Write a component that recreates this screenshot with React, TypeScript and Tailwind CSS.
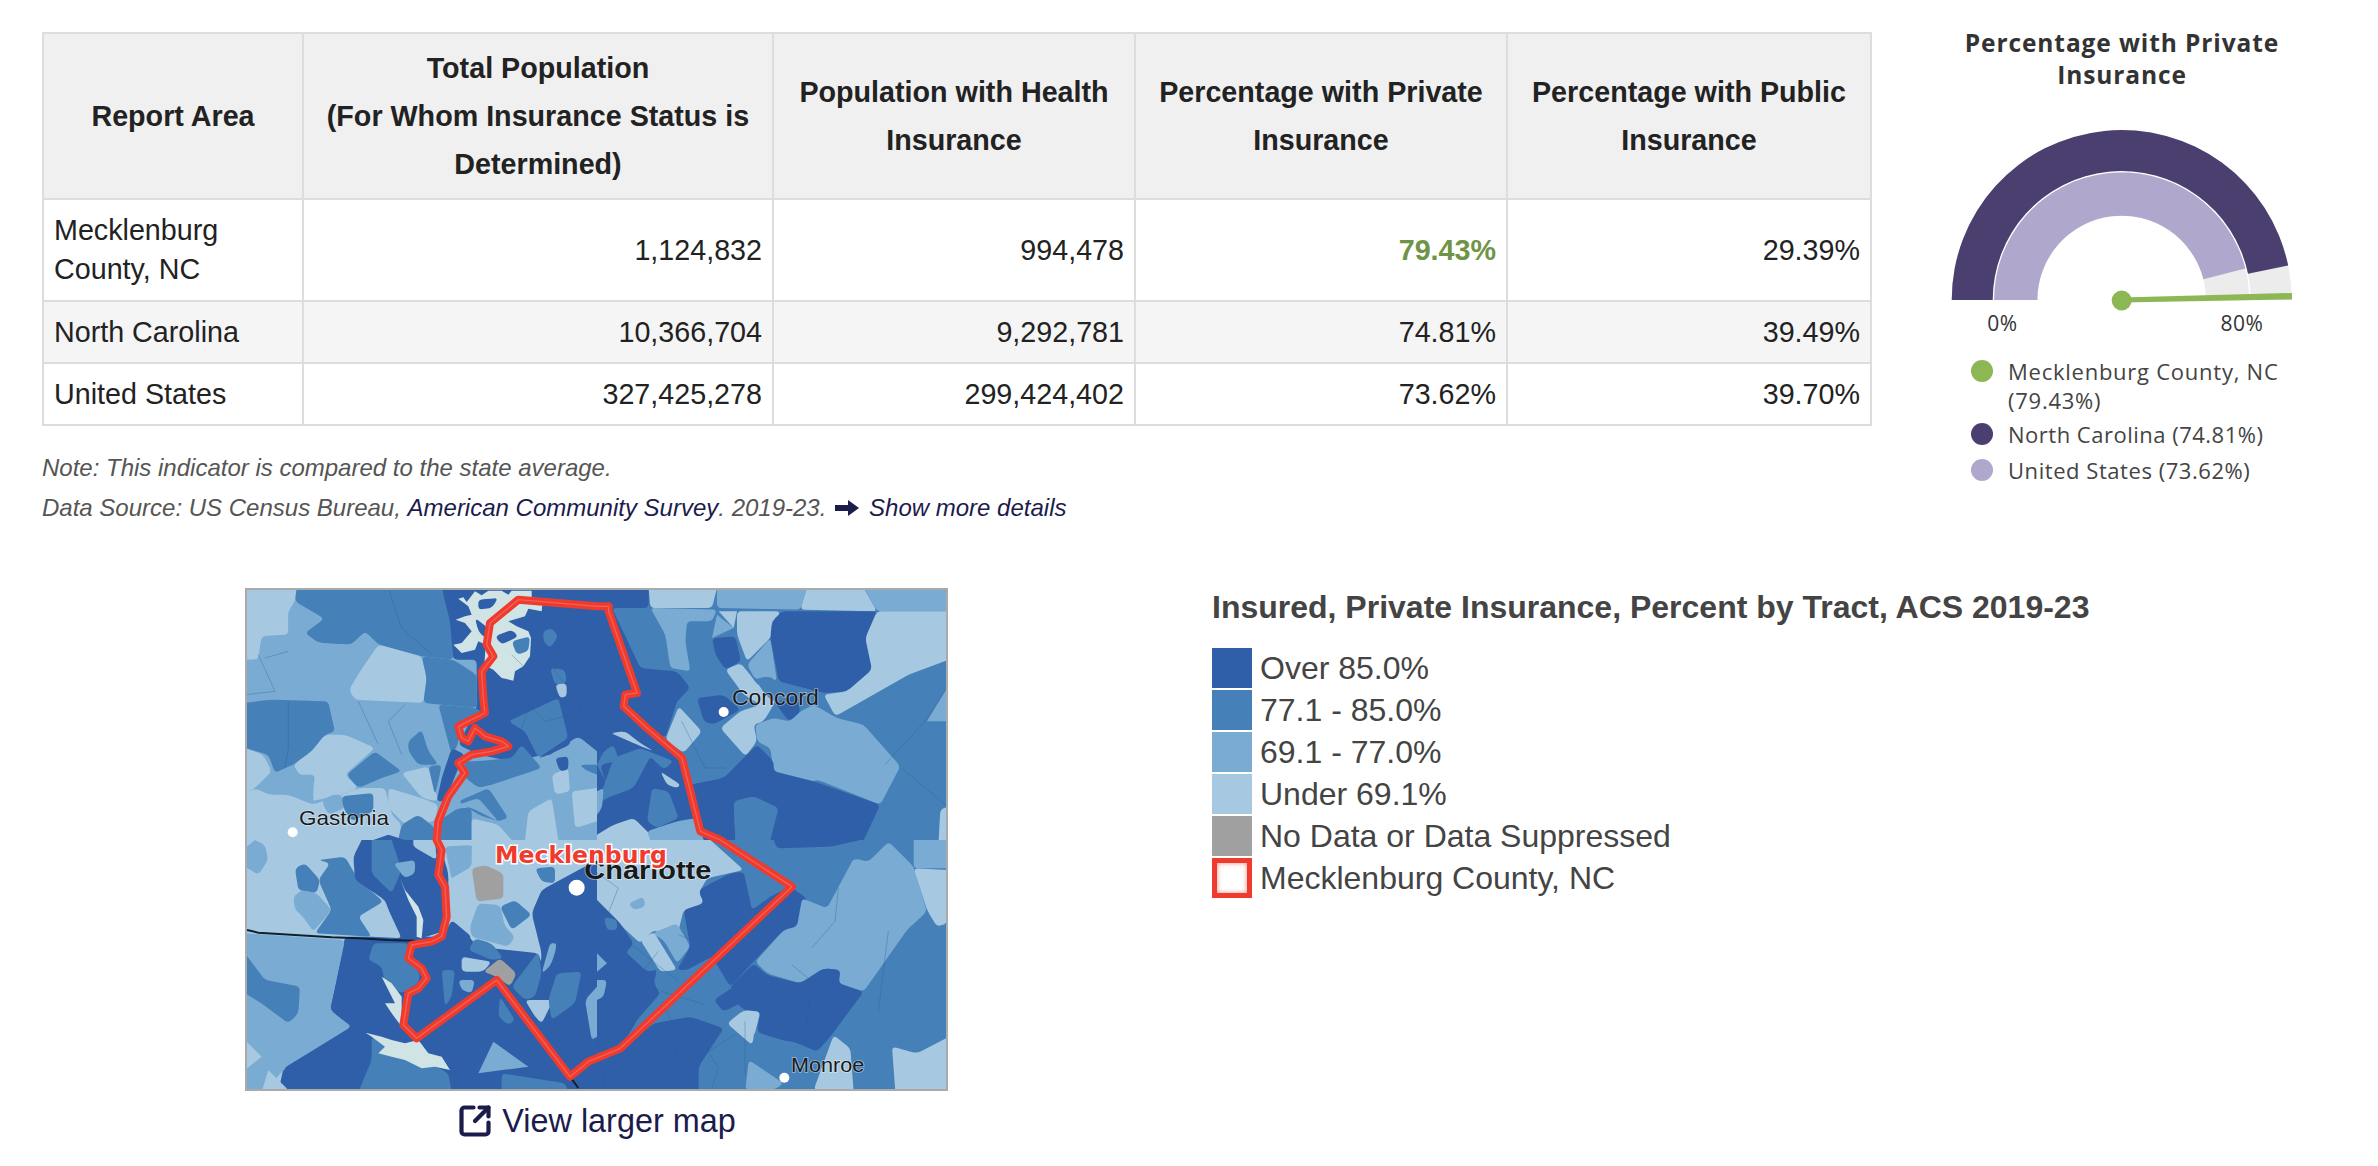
import { SquareArrowOutUpRight } from "lucide-react";

const D = "#2f5fa8", M = "#4580b9", L = "#79abd3", P = "#a6c8e0", G = "#a0a0a0", W = "#d0e4e6";

type Poly = [string, string];

const q1: Poly[] = [
  [L, "0,0 1056,0 1056,756 0,756"],
  [D, "590,0 1056,0 1056,500 900,500 800,520 700,500 640,470 695,360 695,215 625,215 610,100"],
  [P, "0,0 155,0 150,40 130,70 130,140 50,145 40,215 0,215"],
  [L, "150,40 238,92 180,130 130,140 130,70"],
  [M, "155,0 590,0 615,100 625,215 530,205 400,170 360,130 320,170 220,165 180,135 238,92 150,40"],
  [L, "0,215 40,215 50,145 130,140 180,135 220,165 320,170 360,130 400,170 340,250 315,310 320,335 0,325"],
  [P, "400,170 530,205 545,270 535,345 330,335 312,305 345,250"],
  [M, "530,205 625,215 695,260 695,360 535,345 545,270"],
  [M, "0,345 75,335 250,340 270,430 240,440 200,490 145,530 90,555 70,500 0,480"],
  [P, "0,480 55,500 80,550 30,600 0,620"],
  [L, "250,340 535,345 580,350 620,500 590,530 550,530 470,555 410,490 390,480 300,440 270,430"],
  [P, "145,530 200,490 240,440 300,440 390,480 300,560 340,600 290,620 200,640 210,560 160,560"],
  [L, "35,600 90,555 145,530 170,570 205,560 205,650 130,620 70,620"],
  [M, "490,460 530,425 550,490 580,530 520,530 490,490"],
  [M, "580,350 695,360 720,380 640,410 640,470 620,500"],
  [M, "305,560 390,490 470,550 410,570 340,600"],
  [L, "410,570 470,555 530,630 430,600"],
  [P, "470,555 550,535 580,640 530,630"],
  [P, "0,620 30,600 70,620 130,620 205,650 290,620 340,600 420,600 440,680 470,710 460,756 0,756"],
  [P, "430,600 530,630 580,650 570,700 480,710 430,660"],
  [L, "260,620 290,620 300,660 250,680 230,640"],
  [M, "290,625 385,615 385,670 320,700 295,660"],
  [M, "550,535 590,530 580,580 570,620"],
  [D, "620,480 660,500 640,540 600,640 575,640 590,570"],
  [M, "470,710 520,680 570,720 565,756 460,756"],
  [D, "385,756 430,740 480,756"],
  [M, "580,700 640,660 680,660 680,756 570,756"],
  [M, "790,400 940,330 970,450 880,510 840,430"],
  [M, "660,520 700,520 800,510 830,470 890,540 740,590 700,600 650,560"],
  [L, "735,600 890,545 930,600 850,670 840,730 790,700 740,640"],
  [M, "640,640 730,600 790,690 760,700 700,680"],
  [L, "640,650 700,630 760,700 680,660"],
  [L, "900,510 1000,445 1056,490 1056,756 850,756 860,660 930,600"],
  [D, "880,510 975,450 975,470 900,505"],
  [P, "920,560 970,540 975,610 930,620"],
  [P, "850,670 920,630 940,756 840,756"],
  [P, "980,610 1056,600 1056,700 990,720"],
  [D, "930,510 970,505 970,545 945,550"],
  [M, "1005,530 1056,530 1056,560 1020,545"],
  [P, "680,690 760,710 800,756 680,756"],
  [M, "915,240 960,245 965,285 930,290"],
  [P, "930,290 965,285 965,325 945,330"],
  [M, "895,130 920,120 940,145 915,180 895,160"],
  [W, "640,32 655,28 665,42 690,10 710,22 730,8 770,8 790,20 800,8 860,8 860,30 892,50 890,70 850,62 840,85 790,100 815,115 850,130 858,150 855,205 835,235 810,250 805,278 770,270 745,245 718,232 722,170 700,160 690,185 650,195 625,170 650,165 680,130 660,105 632,95 660,85 680,80 670,55"],
  [D, "700,35 760,30 740,60 700,65"],
  [D, "690,90 730,120 720,150 700,130"],
  [D, "750,145 800,125 820,145 770,170"],
  [M, "800,160 855,145 850,190 815,200"],
];

const q2: Poly[] = [
  [M, "0,0 1056,0 1056,756 0,756"],
  [D, "0,0 155,0 155,60 45,60 130,240 240,250 280,300 240,340 205,450 150,420 90,360 0,300"],
  [D, "0,240 130,240 120,320 100,380 200,470 260,520 300,720 310,756 0,756"],
  [P, "155,0 360,0 345,60 160,60"],
  [L, "360,0 630,0 610,65 360,60"],
  [P, "630,0 800,0 840,70 610,65"],
  [L, "800,0 1056,0 1056,70 840,70"],
  [L, "160,60 360,65 345,100 270,100 265,160 280,250 220,240 205,140"],
  [P, "365,70 420,70 410,120"],
  [L, "360,80 410,120 345,150"],
  [D, "345,150 415,145 432,220 385,245 355,200"],
  [P, "420,70 550,70 520,150 450,220 420,140"],
  [L, "520,150 540,280 505,265 475,275 450,230"],
  [P, "385,245 430,225 460,260 480,290 540,310 530,350 500,400 470,410 480,460 445,505 370,420 430,370 490,350 440,320"],
  [D, "520,150 525,100 555,70 840,70 805,150 825,245 750,310 680,315 545,280 530,200"],
  [M, "475,275 520,265 570,310 535,345 505,320"],
  [D, "535,345 600,320 610,375 575,400"],
  [P, "805,150 840,70 1056,70 1056,215 935,260 715,385 680,320 750,310 825,245"],
  [L, "1056,290 990,400 1056,400"],
  [M, "250,335 300,330 310,400 340,430 310,435 260,400"],
  [D, "300,330 380,320 430,365 350,410 320,400"],
  [P, "245,355 315,430 260,495 205,455"],
  [L, "475,410 530,390 580,400 610,370 650,350 720,390 800,410 910,535 850,650 660,575 650,580 530,550 520,480 480,460"],
  [D, "280,590 380,570 480,470 530,520 530,550 650,580 850,650 800,756 520,756 545,660 470,625 410,640 415,756 320,756 295,690"],
  [M, "410,640 470,625 540,660 520,756 415,756"],
  [P, "1056,655 1030,665 1025,756 1056,756"],
  [M, "20,490 50,470 70,530 30,590 0,530"],
  [D, "10,530 55,520 65,580 30,600"],
  [M, "50,510 130,480 230,520 200,545 160,505 110,600 30,630 0,650"],
  [D, "110,630 160,510 200,560 240,530 280,660 240,690 210,630 170,700 110,670"],
  [P, "190,550 250,590 240,600 210,590"],
  [M, "165,600 215,610 245,690 180,720 150,700"],
  [P, "0,740 50,710 110,690 160,740 160,756 0,756"],
  [L, "150,730 240,700 300,690 320,756 160,756"],
  [L, "0,610 20,600 15,660 0,680"],
  [P, "40,435 85,430 130,465 170,490 120,470"],
];

const q3: Poly[] = [
  [P, "0,0 1056,0 1056,756 0,756"],
  [D, "300,290 1056,290 1056,756 100,756 115,685 320,560 255,510"],
  [L, "0,25 30,0 60,15 70,60 40,105 0,80"],
  [P, "60,0 200,0 215,60 150,90 150,160 170,230 175,280 0,270 0,80 40,105 70,60"],
  [P, "210,10 270,20 250,60 220,60"],
  [M, "220,120 255,70 220,60 300,50 340,120 415,185 340,230 380,290 210,280 260,210"],
  [M, "150,85 180,70 225,120 215,160 160,150"],
  [L, "145,170 170,150 215,160 260,210 205,275 170,225 150,210"],
  [D, "350,0 580,0 610,100 610,270 510,300 460,290 420,180 330,120 325,50"],
  [M, "380,0 440,0 470,90 440,160 380,100"],
  [L, "445,70 510,60 510,100 480,115"],
  [P, "345,230 420,190 440,230 470,295 380,290"],
  [P, "505,0 570,0 575,60 505,20"],
  [L, "600,20 680,15 740,80 680,80 620,120"],
  [P, "680,15 740,0 1056,0 1056,40 900,70 880,180 900,400 880,340 700,320 620,240 610,120 680,80"],
  [M, "870,85 930,80 930,130 890,125"],
  [D, "890,150 1056,60 1056,340 900,470 880,460 890,340 860,220"],
  [L, "700,190 765,195 780,260 810,290 790,320 680,290 675,260"],
  [M, "765,200 810,180 860,225 800,270"],
  [D, "620,240 680,290 660,340 640,420 590,300"],
  [M, "670,330 690,295 740,310 775,355 740,360"],
  [P, "650,350 740,365 715,395 650,395"],
  [G, "680,85 720,75 775,100 775,175 695,185"],
  [G, "715,395 765,355 815,400 795,440 755,410"],
  [M, "800,440 880,335 890,400 870,470 840,480"],
  [P, "840,480 875,480 925,480 890,550 870,530"],
  [M, "765,470 810,540 790,555 760,530"],
  [M, "935,400 1010,395 990,490 920,540 910,480"],
  [L, "1056,440 1020,480 1040,600 1056,590"],
  [L, "915,310 935,310 930,340 915,380 890,400"],
  [L, "0,280 300,300 255,510 320,560 115,690 60,756 0,756"],
  [M, "0,340 60,420 165,440 160,520 130,550 50,490 0,460"],
  [P, "0,600 50,650 0,690"],
  [P, "70,690 130,750 50,756"],
  [D, "300,300 400,300 400,370 410,440 470,480 470,560 370,590 380,660 350,756 150,756 115,685 320,560 255,510 290,370"],
  [M, "385,310 490,310 490,360 525,400 520,430 470,460 420,430 410,380 370,360"],
  [M, "380,590 500,640 610,700 620,756 340,756 380,660"],
  [L, "745,605 850,680 700,700"],
  [M, "770,700 960,730 970,756 770,756"],
  [M, "590,390 630,390 620,470 600,500"],
  [L, "640,420 690,420 680,460 650,450"],
  [W, "410,410 440,430 470,470 470,560 440,520 420,490 450,490 430,450"],
  [W, "362,578 410,590 440,600 480,610 520,600 550,640 590,650 615,690 570,680 530,685 480,660 440,650 400,640 420,620 380,590"],
  [W, "465,115 480,150 520,200 535,240 530,295 515,290 515,230 490,180"],
];

const q4: Poly[] = [
  [M, "0,0 1056,0 1056,756 0,756"],
  [P, "0,0 340,0 440,90 330,115 305,160 325,190 300,200 260,210 240,290 170,270 130,310 0,190"],
  [D, "0,180 70,250 110,310 85,340 180,390 170,430 190,460 120,540 110,560 70,620 0,640"],
  [D, "305,150 400,100 440,95 465,210 520,170 580,140 630,175 600,260 550,280 470,365 400,440 345,350 270,390 240,390 280,320 260,210 320,190"],
  [M, "445,90 550,140 465,205"],
  [D, "530,0 790,0 700,20 540,25"],
  [L, "615,175 690,205 770,55 815,65 875,5 950,80 990,215 930,270 800,455 725,430 730,390 680,385 610,430 510,400 475,365 560,270 600,260"],
  [L, "950,0 1056,0 1056,85 950,85"],
  [P, "950,85 1056,90 1050,250 1020,260 990,210"],
  [D, "400,440 470,370 510,405 610,430 680,385 730,390 725,430 800,455 700,590 660,635 590,605 540,600 480,575 490,515 440,510 420,490"],
  [D, "70,630 170,550 280,530 380,565 305,680 305,756 0,756 0,650"],
  [M, "120,550 170,490 240,430 350,470 380,560 280,530 170,545"],
  [M, "180,395 260,400 390,435 340,470 240,420"],
  [D, "350,480 410,440 430,490 380,515"],
  [P, "390,550 440,510 490,515 465,615"],
  [M, "470,575 590,610 620,640 700,630 620,750 560,720 470,640"],
  [L, "455,660 560,730 530,750 445,750"],
  [P, "650,750 710,585 760,625 770,756"],
  [P, "885,620 960,640 1056,590 1056,756 895,756"],
  [L, "95,190 140,170 145,200 110,210"],
  [L, "165,280 240,250 280,320 240,370 200,300"],
  [P, "130,300 170,275 240,390 190,395"],
  [M, "90,340 130,310 180,390 150,395"],
  [M, "20,230 60,240 60,270 30,270"],
  [L, "0,340 30,370 0,395"],
  [L, "0,420 30,420 20,470 0,480"],
];

const tractLines = [
  "1780,900 1770,1000 1700,1080", "1450,900 1430,1000 1500,1100", "1250,1240 1300,1340 1280,1500",
  "1300,1040 1400,1080 1460,1200", "1110,1180 1180,1260 1130,1360", "1180,1260 1250,1210 1380,1250",
  "900,1340 980,1420 1040,1440", "950,1290 1060,1360 1080,1510", "1340,1310 1420,1440 1400,1500",
  "1500,1300 1500,1460", "1240,1400 1360,1410 1470,1340", "950,120 930,250 1000,340 1020,440",
  "820,320 900,400 980,380 1090,340", "1060,240 1130,340 1160,410", "800,200 880,280 830,420",
  "1060,250 1150,270 1190,300", "1020,450 1100,440 1170,390", "130,190 60,210", "430,0 470,120 560,200",
  "130,340 130,480 120,540", "340,340 400,470", "480,350 430,400 470,500", "1310,400 1380,540 1440,540",
  "1920,530 2040,400 2112,290", "1970,540 2112,660", "1900,1270 1930,1030", "1640,1130 1700,1180 1680,1350",
  "1050,850 1120,900 1080,1000", "1090,1120 1170,1180 1240,1090", "1160,1070 1300,1180", "40,200 90,310 0,320",
];

const countyPath =
  "M1091,55 L1056,55 L820,35 L735,105 L725,170 L745,205 L710,250 L715,330 L720,375 L680,395 L640,415 L650,450 L670,460 L690,420 L720,445 L770,460 L790,475 L740,490 L680,500 L640,525 L660,555 L610,625 L580,700 L575,756 L590,786 L580,861 L600,896 L605,986 L590,1046 L560,1061 L500,1071 L490,1111 L530,1141 L545,1171 L520,1201 L490,1216 L475,1311 L515,1351 L755,1176 L975,1466 L1030,1421 L1126,1381 L1641,896 L1426,756 L1366,730 L1311,510 L1206,420 L1136,355 L1141,320 L1176,315 L1091,70 Z";

function roundedPath(points: string, water: boolean) {
  const pts = points.split(" ").map((p) => p.split(",").map(Number));
  if (water || pts.length < 4) return `M${points.replace(/ /g, " L")} Z`;
  const edge = (p: number[]) => p[0] <= 0 || p[0] >= 1056 || p[1] <= 0 || p[1] >= 756;
  const n = pts.length;
  let d = "";
  pts.forEach((p, i) => {
    if (edge(p)) {
      d += `${i === 0 ? "M" : "L"}${p[0]},${p[1]} `;
      return;
    }
    const toward = (o: number[]) => {
      const dx = o[0] - p[0], dy = o[1] - p[1];
      const len = Math.hypot(dx, dy) || 1;
      const r = Math.min(14, len / 2.5);
      return [p[0] + (dx / len) * r, p[1] + (dy / len) * r];
    };
    const a = toward(pts[(i - 1 + n) % n]);
    const b = toward(pts[(i + 1) % n]);
    d += `${i === 0 ? "M" : "L"}${a[0].toFixed(1)},${a[1].toFixed(1)} Q${p[0]},${p[1]} ${b[0].toFixed(1)},${b[1].toFixed(1)} `;
  });
  return d + "Z";
}

function Quadrant({ polys, x, y }: { polys: Poly[]; x: number; y: number }) {
  return (
    <g transform={`translate(${x} ${y})`}>
      {polys.map(([fill, points], i) => (
        <path key={i} fill={fill} d={roundedPath(points, fill === W)} />
      ))}
    </g>
  );
}

function MapLabel({ x, y, size, width, children, bold }: { x: number; y: number; size: number; width: number; children: string; bold?: boolean }) {
  return (
    <text
      x={x}
      y={y}
      fontSize={size}
      fontFamily="'Liberation Sans', Arial, sans-serif"
      fontWeight={bold ? 700 : 400}
      fill="#1a1a1a"
      stroke="#ffffff"
      strokeOpacity={0.45}
      strokeWidth={5}
      paintOrder="stroke"
      textLength={width}
      lengthAdjust="spacingAndGlyphs"
    >
      {children}
    </text>
  );
}

function TractMap() {
  return (
    <svg width="699" height="499" viewBox="6 6 2097 1497" className="block">
      <defs>
        <filter id="soft" x="0" y="0" width="1" height="1">
          <feGaussianBlur stdDeviation="2" />
        </filter>
      </defs>
      <g filter="url(#soft)">
        <rect x="0" y="0" width="2112" height="1512" fill={L} />
        <rect x="1056" y="600" width="1056" height="300" fill={M} />
        <Quadrant polys={q1} x={0} y={0} />
        <Quadrant polys={q2} x={1056} y={0} />
        <Quadrant polys={q3} x={0} y={756} />
        <Quadrant polys={q4} x={1056} y={756} />
        {tractLines.map((points, i) => (
          <polyline key={i} points={points} fill="none" stroke="#2a5a96" strokeOpacity={0.4} strokeWidth={2.5} />
        ))}
        <polyline
          points="6,1026 40,1034 150,1041 260,1048 340,1051 430,1056 510,1058"
          fill="none"
          stroke="#10202e"
          strokeWidth={6}
        />
        <polyline points="975,1466 1000,1500" fill="none" stroke="#10202e" strokeWidth={6} />
        <path d={countyPath} fill="none" stroke="#ef3b2e" strokeWidth={24} strokeLinejoin="round" />
        <path d={countyPath} fill="none" stroke="#f98f85" strokeWidth={4} strokeLinejoin="round" strokeOpacity={0.45} />
      </g>
      <circle cx={143} cy={733} r={15} fill="#ffffff" />
      <circle cx={1436} cy={372} r={15} fill="#ffffff" />
      <circle cx={1618} cy={1469} r={15} fill="#ffffff" />
      <circle cx={995} cy={899} r={24} fill="#ffffff" />
      <MapLabel x={162} y={710} size={63} width={270}>Gastonia</MapLabel>
      <MapLabel x={1461} y={352} size={66} width={260}>Concord</MapLabel>
      <MapLabel x={1638} y={1451} size={60} width={220}>Monroe</MapLabel>
      <MapLabel x={1018} y={873} size={80} width={381} bold>Charlotte</MapLabel>
      <text
        x={750}
        y={826}
        fontSize={70}
        fontFamily="'DejaVu Sans', sans-serif"
        fontWeight={700}
        fill="#ef3b2e"
        stroke="#ffffff"
        strokeWidth={9}
        paintOrder="stroke"
        textLength={516}
        lengthAdjust="spacingAndGlyphs"
      >
        Mecklenburg
      </text>
    </svg>
  );
}

function arc(r0: number, r1: number, a0: number, a1: number) {
  const cx = 201.7, cy = 190;
  const pt = (r: number, a: number) => {
    const t = (a * Math.PI) / 180;
    return `${(cx - r * Math.cos(t)).toFixed(2)} ${(cy - r * Math.sin(t)).toFixed(2)}`;
  };
  return `M${pt(r1, a0)} A${r1} ${r1} 0 0 1 ${pt(r1, a1)} L${pt(r0, a1)} A${r0} ${r0} 0 0 0 ${pt(r0, a0)} Z`;
}

function Gauge() {
  return (
    <svg width="404" height="240" viewBox="0 0 404 240" className="block">
      <path d={arc(129, 170, 0, 180)} fill="#ececec" />
      <path d={arc(84.3, 127.6, 0, 180)} fill="#ececec" />
      <path d={arc(129, 170, 0, 168.3)} fill="#4a3f6f" />
      <path d={arc(84.3, 127.6, 0, 165.7)} fill="#b0a8cc" />
      <polygon points="201.7,187.5 372,183 372,189.5 201.7,192.5" fill="#8db654" />
      <circle cx="201.7" cy="190.5" r="10" fill="#8db654" />
      <text x="82.5" y="221" textAnchor="middle" fontSize="21" letterSpacing="0.5" fill="#333333" fontFamily="'Open Sans', sans-serif">0%</text>
      <text x="322" y="221" textAnchor="middle" fontSize="21" letterSpacing="0.5" fill="#333333" fontFamily="'Open Sans', sans-serif">80%</text>
    </svg>
  );
}

const rows = [
  { area: "Mecklenburg County, NC", a: "1,124,832", b: "994,478", c: "79.43%", d: "29.39%", h: "h-[102px]", bg: "bg-white", hi: true },
  { area: "North Carolina", a: "10,366,704", b: "9,292,781", c: "74.81%", d: "39.49%", h: "h-[62px]", bg: "bg-[#f5f5f5]", hi: false },
  { area: "United States", a: "327,425,278", b: "299,424,402", c: "73.62%", d: "39.70%", h: "h-[62px]", bg: "bg-white", hi: false },
];

const th = "border-2 border-[#dddddd] bg-[#f0f0f0] px-[10px] text-center align-middle font-bold leading-[48px]";
const td = "border-2 border-[#dddddd] px-[10px] text-right align-middle leading-[39px]";

const legend = [
  { label: "Over 85.0%", cls: "bg-[#2f5fa8]" },
  { label: "77.1 - 85.0%", cls: "bg-[#4580b9]" },
  { label: "69.1 - 77.0%", cls: "bg-[#79abd3]" },
  { label: "Under 69.1%", cls: "bg-[#a6c8e0]" },
  { label: "No Data or Data Suppressed", cls: "bg-[#a0a0a0]" },
];

export default function App() {
  return (
    <div className="min-h-[1166px] bg-white pl-[42px] pt-[27px] font-['Liberation_Sans',Arial,sans-serif] text-[#222222]">
      <div className="flex items-start">
        <div className="w-[1829px] shrink-0 pt-[5px]">
          <table className="w-[1828px] table-fixed border-collapse text-[28.7px]">
            <colgroup>
              <col className="w-[260px]" />
              <col className="w-[470px]" />
              <col className="w-[362px]" />
              <col className="w-[372px]" />
              <col className="w-[364px]" />
            </colgroup>
            <thead>
              <tr className="h-[166px]">
                <th className={th}>Report Area</th>
                <th className={th}>
                  Total Population
                  <br />
                  (For Whom Insurance Status is Determined)
                </th>
                <th className={th}>Population with Health Insurance</th>
                <th className={th}>Percentage with Private Insurance</th>
                <th className={th}>Percentage with Public Insurance</th>
              </tr>
            </thead>
            <tbody>
              {rows.map((r) => (
                <tr key={r.area} className={`${r.h} ${r.bg}`}>
                  <td className={`${td} !text-left`}>{r.area}</td>
                  <td className={td}>{r.a}</td>
                  <td className={td}>{r.b}</td>
                  <td className={r.hi ? `${td} font-bold text-[#6f9446]` : td}>{r.c}</td>
                  <td className={td}>{r.d}</td>
                </tr>
              ))}
            </tbody>
          </table>
          <div className="mt-[22px] text-[24px] italic leading-[40px] text-[#555555]">
            <p>Note: This indicator is compared to the state average.</p>
            <p className="flex items-center">
              <span className="whitespace-pre">Data Source: US Census Bureau, </span>
              <span className="text-[#1c1c4c]">American Community Survey</span>
              <span className="whitespace-pre">. 2019-23. </span>
              <svg width="26" height="20" viewBox="0 0 26 20" className="mx-[1px]">
                <path d="M1 7 H14 V2 L25 10 L14 18 V13 H1 Z" fill="#1c1c4c" />
              </svg>
              <span className="ml-[8px] text-[#1c1c4c]">Show more details</span>
            </p>
          </div>
        </div>

        <div className="ml-[49px] w-[404px] shrink-0 font-['Open_Sans',sans-serif]">
          <h2 className="text-center text-[24.5px] font-bold leading-[32px] tracking-[0.9px] text-[#333333]">
            Percentage with Private
            <br />
            Insurance
          </h2>
          <div className="mt-[19px]">
            <Gauge />
          </div>
          <ul className="mt-[7px] pl-[51px] text-[22px] text-[#444444]">
            <li className="relative pl-[37px] leading-[29px] tracking-[0.75px]">
              <span className="absolute left-0 top-[3px] h-[22px] w-[22px] rounded-full bg-[#8db654]" />
              Mecklenburg County, NC
              <br />
              (79.43%)
            </li>
            <li className="relative mt-[5px] pl-[37px] leading-[29px] tracking-[0.5px]">
              <span className="absolute left-0 top-[3px] h-[22px] w-[22px] rounded-full bg-[#4a3f6f]" />
              North Carolina (74.81%)
            </li>
            <li className="relative mt-[7px] pl-[37px] leading-[29px] tracking-[0.55px]">
              <span className="absolute left-0 top-[3px] h-[22px] w-[22px] rounded-full bg-[#b0a8cc]" />
              United States (73.62%)
            </li>
          </ul>
        </div>
      </div>

      <div className="mt-[60px] flex items-start pl-[203px]">
        <div className="w-[703px] shrink-0">
          <div className="h-[503px] w-[703px] border-2 border-[#aaaaaa]">
            <TractMap />
          </div>
          <a className="mt-[10px] flex items-center justify-center gap-[9px] text-[32.4px] leading-[40px] text-[#1c1c4c]">
            <SquareArrowOutUpRight size={36} strokeWidth={2.8} />
            View larger map
          </a>
        </div>
        <div className="ml-[264px] text-[#444444]">
          <h3 className="text-[32px] font-bold leading-[38px]">Insured, Private Insurance, Percent by Tract, ACS 2019-23</h3>
          <ul className="mt-[22px] flex flex-col gap-[2px] text-[32px] leading-[40px]">
            {legend.map((l) => (
              <li key={l.label} className="flex items-center gap-[8px]">
                <span className={`h-[40px] w-[40px] ${l.cls}`} />
                {l.label}
              </li>
            ))}
            <li className="flex items-center gap-[8px]">
              <span className="h-[40px] w-[40px] border-[5px] border-[#ef3b2e] bg-white shadow-[inset_0_0_5px_#f28a80]" />
              Mecklenburg County, NC
            </li>
          </ul>
        </div>
      </div>
    </div>
  );
}
